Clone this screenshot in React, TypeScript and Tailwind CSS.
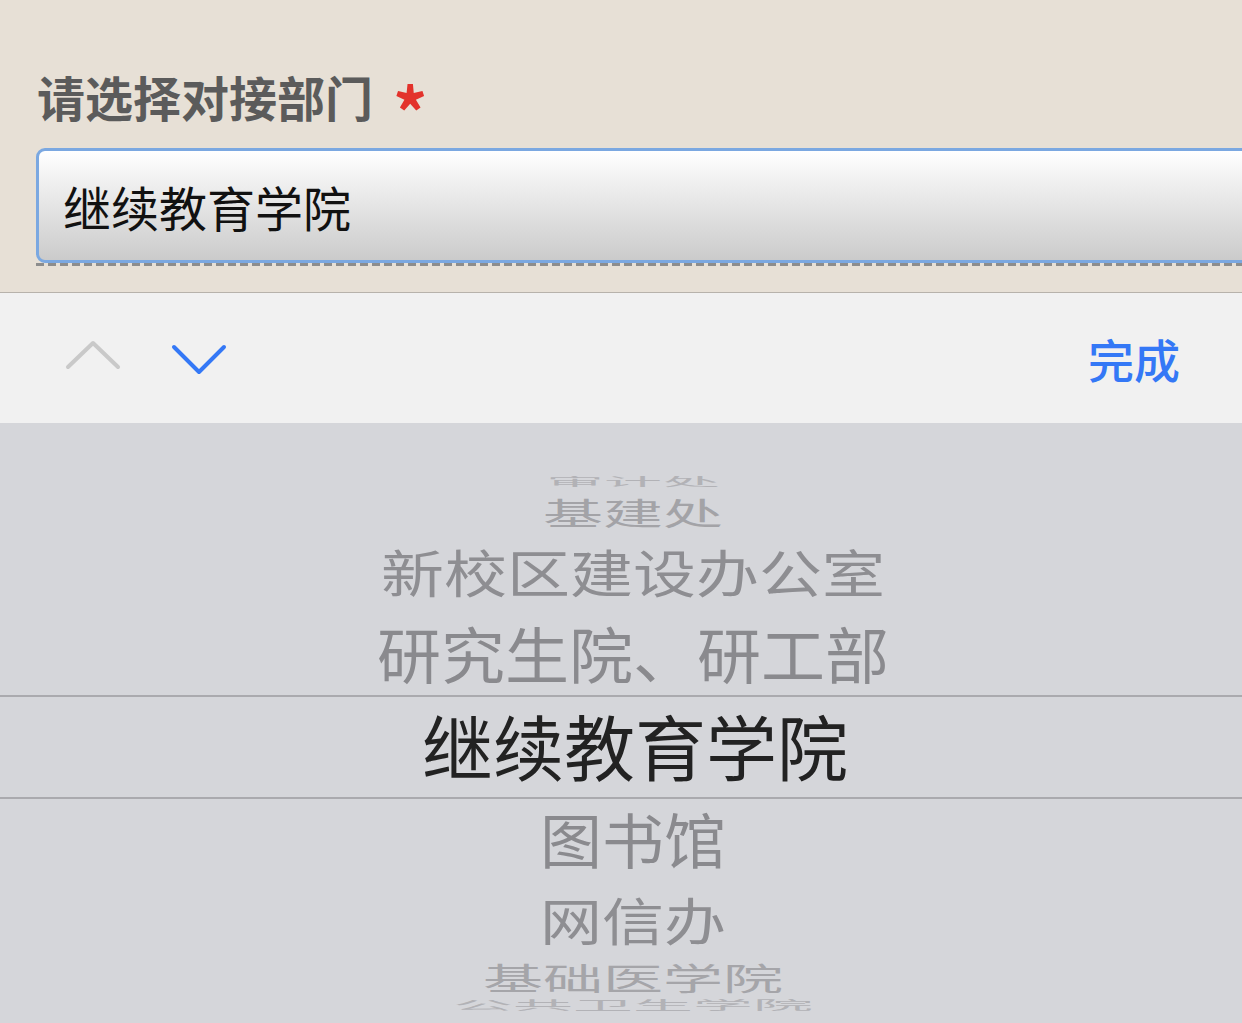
const font = { fontFamily: '"Noto Sans CJK SC", "Noto Sans", sans-serif' };

type Row = { text: string; h: string; size: string; scale: string; color: string };

const above: Row[] = [
  { text: "审计处", h: "h-[24px]", size: "text-[58px]", scale: "scale-y-[0.2]", color: "text-[#b2b2b6]" },
  { text: "基建处", h: "h-[36px]", size: "text-[60px]", scale: "scale-y-[0.52]", color: "text-[#a3a3a7]" },
  { text: "新校区建设办公室", h: "h-[82px]", size: "text-[63px]", scale: "scale-y-[0.82]", color: "text-[#8e8e92]" },
  { text: "研究生院、研工部", h: "h-[81px]", size: "text-[64px]", scale: "scale-y-[0.96]", color: "text-[#8a8a8e]" },
];

const below: Row[] = [
  { text: "图书馆", h: "h-[84px]", size: "text-[62px]", scale: "scale-y-[0.97]", color: "text-[#8a8a8e]" },
  { text: "网信办", h: "h-[78px]", size: "text-[62px]", scale: "scale-y-[0.82]", color: "text-[#8e8e92]" },
  { text: "基础医学院", h: "h-[36px]", size: "text-[60px]", scale: "scale-y-[0.52]", color: "text-[#a5a5a9]" },
  { text: "公共卫生学院", h: "h-[22px]", size: "text-[60px]", scale: "scale-y-[0.2]", color: "text-[#b2b2b6]" },
];

function PickerRow({ row }: { row: Row }) {
  return (
    <div className={`${row.h} flex items-center justify-center overflow-visible`}>
      <span className={`${row.size} ${row.scale} ${row.color} -translate-y-[3px] leading-none whitespace-nowrap`}>
        {row.text}
      </span>
    </div>
  );
}

export default function App() {
  return (
    <div className="w-[1242px] h-[1023px] overflow-hidden flex flex-col" style={font}>
      {/* form area */}
      <div className="h-[293px] shrink-0 bg-[#e7e0d6] border-b border-[#b7b2ab] flex flex-col overflow-hidden">
        <div className="pt-[72px] pl-[37px] flex items-center h-[120px]">
          <span className="text-[48px] leading-none font-semibold text-[#5b5b5b]">请选择对接部门</span>
          <span className="ml-[20px] text-[68px] leading-none font-bold text-[#e3322b] translate-y-[14px]">*</span>
        </div>
        <div className="mt-[28px] pl-[36px]">
          <div className="w-[1240px] h-[115px] rounded-[9px] border-[3px] border-[#7ba8e1] bg-gradient-to-b from-white to-[#cbcbcb] flex items-center pl-[24px]">
            <span className="text-[48px] leading-none text-[#111]">继续教育学院</span>
          </div>
          <div className="h-[3px] bg-[repeating-linear-gradient(90deg,#8d8d8d_0_8px,transparent_8px_12px)]" />
        </div>
      </div>

      {/* toolbar */}
      <div className="h-[130px] shrink-0 bg-[#f1f1f1] flex items-center pl-[64px] pr-[62px]">
        <svg width="58" height="34" viewBox="0 0 58 34" className="-mt-[4px]">
          <polyline points="4,28 29,4 54,28" fill="none" stroke="#c9c9c9" strokeWidth="4" strokeLinecap="round" strokeLinejoin="round" />
        </svg>
        <svg width="58" height="34" viewBox="0 0 58 34" className="ml-[48px] mt-[4px]">
          <polyline points="4,4 29,29 54,4" fill="none" stroke="#3478f6" strokeWidth="4" strokeLinecap="round" strokeLinejoin="round" />
        </svg>
        <span className="ml-auto text-[46px] leading-none font-medium text-[#3478f6]">完成</span>
      </div>

      {/* picker wheel */}
      <div className="flex-1 bg-[#d5d6da] flex flex-col overflow-hidden">
        <div className="h-[49px] shrink-0" />
        <div className="flex flex-col pl-[24px]">
          {above.map((r) => (
            <PickerRow key={r.text} row={r} />
          ))}
        </div>
        <div className="h-[104px] shrink-0 border-y-2 border-[#aaaaae] flex items-center justify-center pl-[28px]">
          <span className="text-[71px] leading-none text-[#222] -translate-y-[3px]">继续教育学院</span>
        </div>
        <div className="flex flex-col pl-[24px]">
          {below.map((r) => (
            <PickerRow key={r.text} row={r} />
          ))}
        </div>
      </div>
    </div>
  );
}
